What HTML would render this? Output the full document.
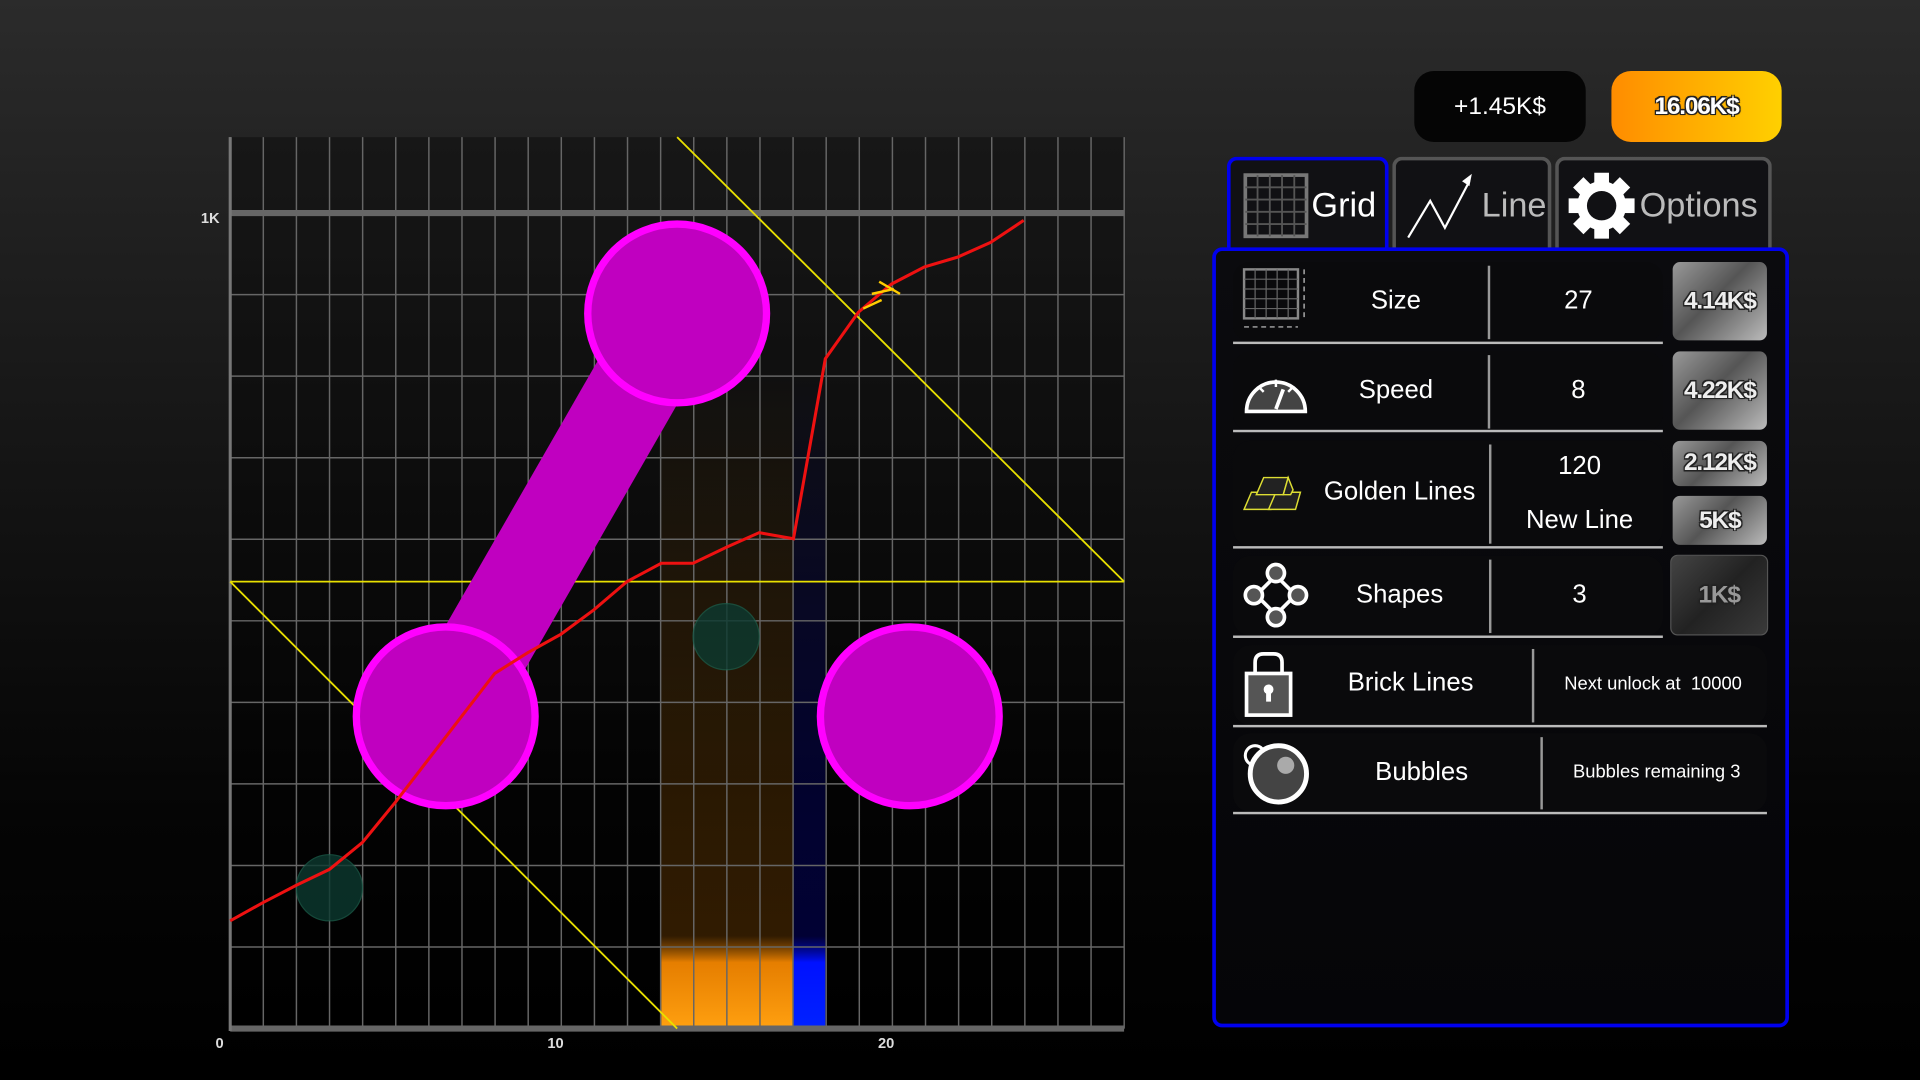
<!DOCTYPE html>
<html><head><meta charset="utf-8"><style>
*{margin:0;padding:0;box-sizing:border-box}
html,body{width:1920px;height:1080px;overflow:hidden;background:#000}
body{font-family:"Liberation Sans","DejaVu Sans",sans-serif;color:#fff}
#w{position:absolute;left:0;top:0;width:1568px;height:882px;transform:scale(1.22449);transform-origin:0 0;background:linear-gradient(#2b2b2b 0%,#161616 40%,#050505 75%,#000 100%)}
.a{position:absolute}
.pill{position:absolute;border-radius:16px;display:flex;align-items:center;justify-content:center;font-size:20px}
.tab{position:absolute;background:#111114;border:3px solid #555;border-bottom:none;border-radius:8px 8px 0 0;display:flex;align-items:center;font-size:28px;color:#bbb}
.row{position:absolute;left:1007px;background:#0a0a0c;border-radius:14px}
.hl{position:absolute;height:2px;background:#bbb;left:1007px}
.vl{position:absolute;width:2px;background:#999}
.t{position:absolute;font-size:21px;text-align:center;transform:translateX(-50%);white-space:nowrap}
.btn{position:absolute;border-radius:6px;background:linear-gradient(135deg,#999 0%,#555 45%,#bbb 100%);display:flex;align-items:center;justify-content:center;font-size:20px;font-weight:bold;color:#eee;text-shadow:-1px -1px 0 #222,1px -1px 0 #222,-1px 1px 0 #222,1px 1px 0 #222,0 0 2px #000;letter-spacing:-1px}
</style></head><body><div id="w">
<svg class="a" style="left:0;top:0" width="1568" height="882" viewBox="0 0 1568 882">
<defs>
<linearGradient id="og" x1="0" y1="0" x2="0" y2="1"><stop offset="0" stop-color="#ff9900" stop-opacity="0"/><stop offset="0.86" stop-color="#c06a00" stop-opacity="0.25"/><stop offset="0.9" stop-color="#ff8c00" stop-opacity="0.9"/><stop offset="1" stop-color="#ffa010"/></linearGradient>
<linearGradient id="bg" x1="0" y1="0" x2="0" y2="1"><stop offset="0" stop-color="#0000ff" stop-opacity="0"/><stop offset="0.86" stop-color="#0000aa" stop-opacity="0.3"/><stop offset="0.9" stop-color="#0011ff"/><stop offset="1" stop-color="#0022ff"/></linearGradient>
</defs>
<rect x="188" y="112" width="730" height="728" fill="#000" opacity="0.35"/>
<rect x="540" y="300" width="108" height="540" fill="url(#og)"/>
<rect x="648" y="300" width="26" height="540" fill="url(#bg)"/>
<g stroke="#666" stroke-width="1.2" id="grid"></g>
<line x1="188" y1="174" x2="918" y2="174" stroke="#666" stroke-width="5"/>
<line x1="188" y1="840" x2="918" y2="840" stroke="#666" stroke-width="5"/>
<line x1="188" y1="112" x2="188" y2="842" stroke="#777" stroke-width="2.5"/>
<circle cx="593" cy="520" r="27" fill="#0c3a30" opacity="0.8" stroke="#1a5a48" stroke-width="1"/>
<circle cx="269" cy="725" r="27" fill="#0c3a30" opacity="0.8" stroke="#1a5a48" stroke-width="1"/>
<g stroke="#e8e000" stroke-width="1.5" fill="none">
<line x1="188" y1="475" x2="918" y2="475"/>
<line x1="553" y1="112" x2="918" y2="475"/>
<line x1="188" y1="475" x2="553" y2="840"/>
</g>
<line x1="553" y1="256" x2="364" y2="585" stroke="#c000c0" stroke-width="74"/>
<circle cx="553" cy="256" r="73" fill="#c000c0" stroke="#ff00ff" stroke-width="6"/>
<circle cx="364" cy="585" r="73" fill="#c000c0" stroke="#ff00ff" stroke-width="6"/>
<circle cx="743" cy="585" r="73" fill="#c000c0" stroke="#ff00ff" stroke-width="6"/>
<polyline fill="none" stroke="#ee1111" stroke-width="2.5" points="188,752 215,737 242,723 269,710 296,688 323,655 350,620 377,585 404,550 431,533 458,518 485,498 512,475 540,460 566,460 593,447 620,435 648,440 674,293 701,255 728,232 755,218 782,210 809,198 836,180"/>
<g stroke="#ffcc00" stroke-width="2"><line x1="705" y1="252" x2="720" y2="245"/><line x1="712" y1="240" x2="730" y2="236"/><line x1="718" y1="230" x2="735" y2="240"/></g>
<g font-family="Liberation Sans" font-size="12" fill="#ddd" font-weight="bold">
<text x="164" y="182">1K</text><text x="176" y="856">0</text><text x="447" y="856">10</text><text x="717" y="856">20</text></g>
</svg>
<div class="pill" style="left:1155px;top:58px;width:140px;height:58px;background:#050505">+1.45K$</div>
<div class="pill" style="left:1316px;top:58px;width:139px;height:58px;background:linear-gradient(90deg,#ff8c00,#ffd000);color:#fff;text-shadow:-1px -1px 0 #222,1px -1px 0 #222,-1px 1px 0 #222,1px 1px 0 #222,0 0 2px #000;font-weight:bold;letter-spacing:-1px">16.06K$</div>
<div class="tab" style="left:1002px;top:128px;width:132px;height:76px;border-color:#0000ee;color:#fff">
<svg width="54" height="54" viewBox="0 0 54 54" style="margin:0 2px 0 10px"><rect x="2" y="2" width="50" height="50" fill="none" stroke="#777" stroke-width="3"/><g stroke="#555" stroke-width="1.5"><line x1="12" y1="2" x2="12" y2="52"/><line x1="22" y1="2" x2="22" y2="52"/><line x1="32" y1="2" x2="32" y2="52"/><line x1="42" y1="2" x2="42" y2="52"/><line x1="2" y1="12" x2="52" y2="12"/><line x1="2" y1="22" x2="52" y2="22"/><line x1="2" y1="32" x2="52" y2="32"/><line x1="2" y1="42" x2="52" y2="42"/></g></svg>Grid</div>
<div class="tab" style="left:1137px;top:128px;width:130px;height:76px">
<svg width="56" height="56" viewBox="0 0 56 56" style="margin:0 6px 0 8px"><polyline points="2,54 20,24 32,46 52,8" fill="none" stroke="#fff" stroke-width="1.8"/><polygon points="54,2 46,8 52,12" fill="#fff"/></svg>Line</div>
<div class="tab" style="left:1270px;top:128px;width:177px;height:76px">
<svg width="54" height="54" viewBox="0 0 54 54" style="margin:0 4px 0 8px"><g fill="#fff"><circle cx="27" cy="27" r="20"/><rect x="21" y="0" width="12" height="54"/><rect x="0" y="21" width="54" height="12"/><rect x="21" y="0" width="12" height="54" transform="rotate(45 27 27)"/><rect x="21" y="0" width="12" height="54" transform="rotate(-45 27 27)"/></g><circle cx="27" cy="27" r="12" fill="#111114"/></svg>Options</div>
<div class="a" style="left:990px;top:202px;width:471px;height:637px;border:3px solid #0000ee;border-radius:8px;background:linear-gradient(#0b0b0e,#050508)"></div>
<div class="row" style="top:214px;width:351px;height:65px"></div>
<div class="row" style="top:287px;width:351px;height:65px"></div>
<div class="row" style="top:360px;width:351px;height:86px"></div>
<div class="row" style="top:454px;width:351px;height:65px"></div>
<div class="row" style="top:527px;width:436px;height:65px"></div>
<div class="row" style="top:599px;width:436px;height:64px"></div>
<div class="hl" style="top:279px;width:351px"></div>
<div class="hl" style="top:351px;width:351px"></div>
<div class="hl" style="top:446px;width:351px"></div>
<div class="hl" style="top:519px;width:351px"></div>
<div class="hl" style="top:592px;width:436px"></div>
<div class="hl" style="top:663px;width:436px"></div>
<div class="vl" style="left:1215px;top:217px;height:60px"></div>
<div class="vl" style="left:1215px;top:290px;height:60px"></div>
<div class="vl" style="left:1216px;top:363px;height:81px"></div>
<div class="vl" style="left:1216px;top:457px;height:60px"></div>
<div class="vl" style="left:1251px;top:530px;height:60px"></div>
<div class="vl" style="left:1258px;top:602px;height:59px"></div>
<svg class="a" style="left:1014px;top:218px" width="56" height="54" viewBox="0 0 56 54"><rect x="2" y="2" width="44" height="40" fill="none" stroke="#888" stroke-width="2"/><g stroke="#666" stroke-width="1"><line x1="11" y1="2" x2="11" y2="42"/><line x1="20" y1="2" x2="20" y2="42"/><line x1="29" y1="2" x2="29" y2="42"/><line x1="38" y1="2" x2="38" y2="42"/><line x1="2" y1="10" x2="46" y2="10"/><line x1="2" y1="18" x2="46" y2="18"/><line x1="2" y1="26" x2="46" y2="26"/><line x1="2" y1="34" x2="46" y2="34"/></g><line x1="51" y1="2" x2="51" y2="44" stroke="#ccc" stroke-dasharray="4 3"/><line x1="2" y1="49" x2="46" y2="49" stroke="#ccc" stroke-dasharray="4 3"/></svg>
<svg class="a" style="left:1014px;top:296px" width="56" height="46" viewBox="0 0 56 46"><path d="M4 40 A24 24 0 1 1 52 40 Z" fill="#444" stroke="#fff" stroke-width="3"/><g stroke="#fff" stroke-width="2"><line x1="28" y1="14" x2="28" y2="20"/><line x1="14" y1="20" x2="18" y2="24"/><line x1="42" y1="20" x2="38" y2="24"/><line x1="28" y1="38" x2="34" y2="22" stroke-width="3"/></g></svg>
<svg class="a" style="left:1014px;top:382px" width="56" height="36" viewBox="0 0 56 36"><g fill="#222" stroke="#dd3" stroke-width="1.2"><polygon points="2,34 8,20 28,20 24,34"/><polygon points="22,34 28,20 48,20 44,34"/><polygon points="12,22 18,8 38,8 34,22"/><polygon points="34,22 38,8 42,18 40,22"/></g></svg>
<svg class="a" style="left:1014px;top:458px" width="56" height="56" viewBox="0 0 56 56"><g stroke="#fff" stroke-width="3" fill="none"><line x1="28" y1="12" x2="12" y2="28"/><line x1="28" y1="12" x2="44" y2="28"/><line x1="12" y1="28" x2="28" y2="44"/><line x1="44" y1="28" x2="28" y2="44"/></g><g fill="#555" stroke="#fff" stroke-width="3"><circle cx="28" cy="10" r="7"/><circle cx="10" cy="28" r="7"/><circle cx="46" cy="28" r="7"/><circle cx="28" cy="46" r="7"/></g></svg>
<svg class="a" style="left:1014px;top:531px" width="50" height="56" viewBox="0 0 50 56"><path d="M11 20 V10 Q11 3 18 3 H26 Q33 3 33 10 V20" fill="none" stroke="#fff" stroke-width="3"/><rect x="4" y="19" width="36" height="34" fill="#555" stroke="#fff" stroke-width="3"/><circle cx="22" cy="32" r="4" fill="#fff"/><rect x="20" y="33" width="4" height="9" fill="#fff"/></svg>
<svg class="a" style="left:1014px;top:603px" width="58" height="56" viewBox="0 0 58 56"><circle cx="11" cy="14" r="8" fill="none" stroke="#fff" stroke-width="2.5"/><circle cx="30" cy="29" r="23" fill="#444" stroke="#fff" stroke-width="4"/><circle cx="36" cy="22" r="7" fill="#aaa"/></svg>
<div class="t" style="left:1140px;top:234px">Size</div>
<div class="t" style="left:1289px;top:234px">27</div>
<div class="t" style="left:1140px;top:307px">Speed</div>
<div class="t" style="left:1289px;top:307px">8</div>
<div class="t" style="left:1143px;top:390px">Golden Lines</div>
<div class="t" style="left:1290px;top:369px">120</div>
<div class="t" style="left:1290px;top:413px">New Line</div>
<div class="t" style="left:1143px;top:474px">Shapes</div>
<div class="t" style="left:1290px;top:474px">3</div>
<div class="t" style="left:1152px;top:546px">Brick Lines</div>
<div class="t" style="left:1350px;top:550px;font-size:15px">Next unlock at&nbsp; 10000</div>
<div class="t" style="left:1161px;top:619px">Bubbles</div>
<div class="t" style="left:1353px;top:622px;font-size:15px">Bubbles remaining 3</div>
<div class="btn" style="left:1366px;top:214px;width:77px;height:64px">4.14K$</div>
<div class="btn" style="left:1366px;top:287px;width:77px;height:64px">4.22K$</div>
<div class="btn" style="left:1366px;top:360px;width:77px;height:37px">2.12K$</div>
<div class="btn" style="left:1366px;top:405px;width:77px;height:40px">5K$</div>
<div class="btn" style="left:1364px;top:453px;width:80px;height:66px;background:linear-gradient(135deg,#444,#222 50%,#3a3a3a);border:1px solid #555;color:#999">1K$</div>
</div>
<script>
var g=document.getElementById('grid'),s='';
for(var k=0;k<=27;k++){var x=188+27.04*k;s+='<line x1="'+x+'" y1="112" x2="'+x+'" y2="840"/>';}
for(var j=0;j<=10;j++){var y=174+66.6*j;s+='<line x1="188" y1="'+y+'" x2="918" y2="'+y+'"/>';}
g.innerHTML=s;
</script>
</body></html>
